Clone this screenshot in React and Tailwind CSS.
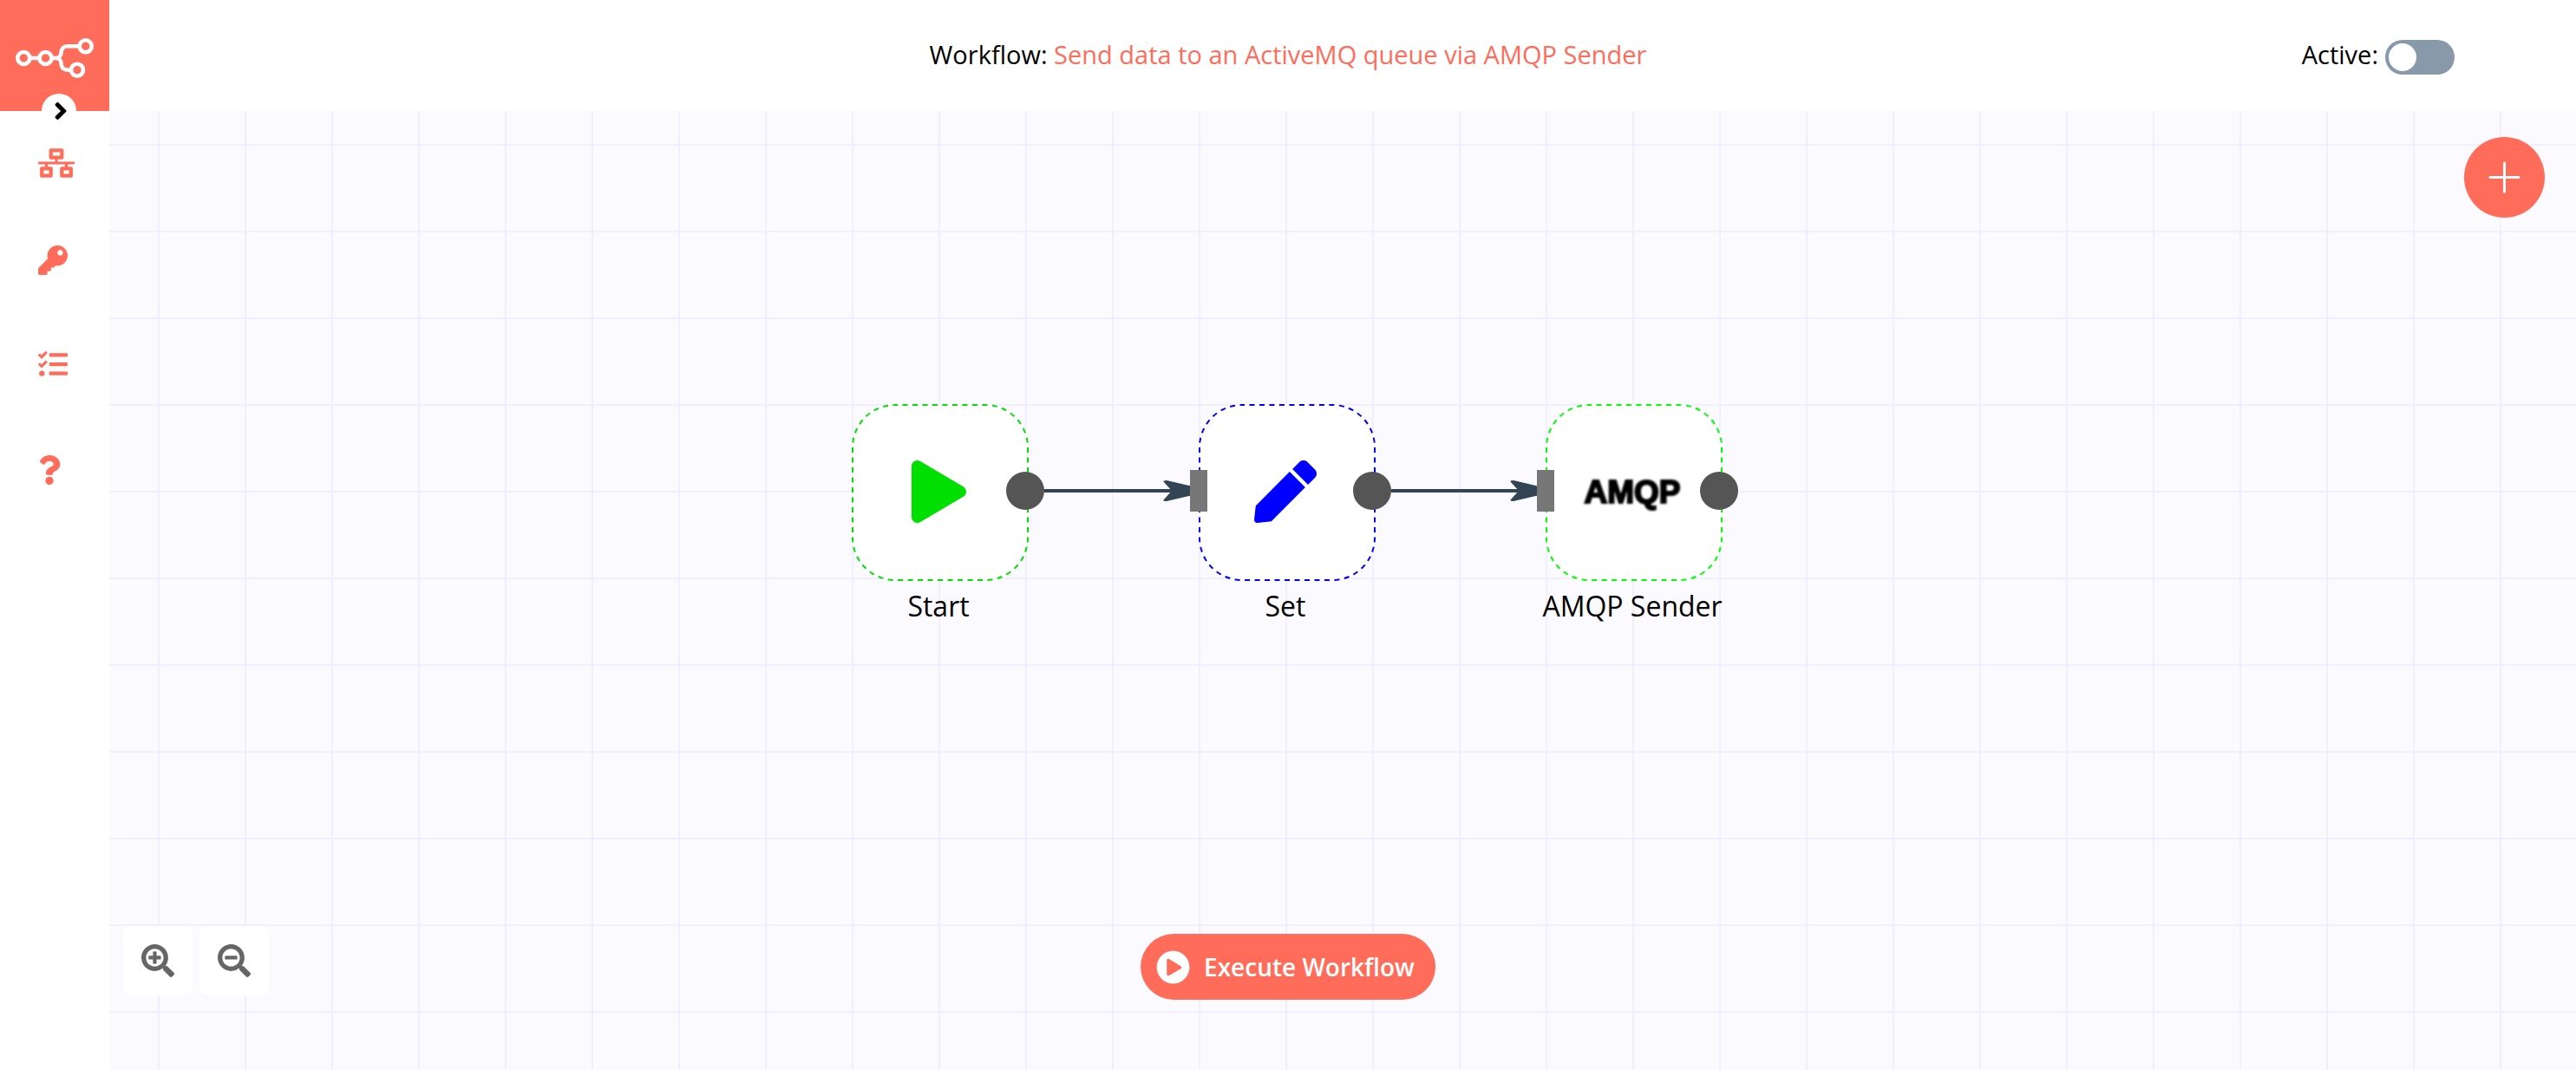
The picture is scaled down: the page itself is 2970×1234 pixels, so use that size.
import { useState } from "react";
import {
  FaAngleRight,
  FaKey,
  FaNetworkWired,
  FaPen,
  FaPlay,
  FaPlayCircle,
  FaQuestion,
  FaSearchMinus,
  FaSearchPlus,
  FaTasks,
} from "react-icons/fa";

const menu = [
  { label: "Workflows", Icon: FaNetworkWired, size: "h-[104px]", width: "w-[42px]" },
  { label: "Credentials", Icon: FaKey, size: "h-[120px]", width: "w-[34px]" },
  { label: "Executions", Icon: FaTasks, size: "h-[120px]", width: "w-[34px]" },
  { label: "Help", Icon: FaQuestion, size: "h-[124px]", width: "w-[26px]" },
];

const nodes = [
  {
    name: "Start",
    left: 856,
    top: 338,
    stroke: "stroke-[#00e000]",
    icon: <FaPlay className="h-[72px] w-[63px] text-[#00e000]" />,
  },
  {
    name: "Set",
    left: 1256,
    top: 338,
    input: true,
    stroke: "stroke-[#0000ff]",
    icon: <FaPen className="size-[72px] text-[#0000ff]" />,
  },
  {
    name: "AMQP Sender",
    left: 1656,
    top: 338,
    input: true,
    stroke: "stroke-[#00ff00]",
    icon: (
      <span className="font-['Liberation_Sans',Arial,sans-serif] text-[37px] leading-none font-bold text-black blur-[1px] [-webkit-text-stroke:2px_black]">
        AMQP
      </span>
    ),
  },
];

const connections = [
  { left: 1078, top: 426 },
  { left: 1478, top: 426 },
];

function Logo() {
  return (
    <svg viewBox="0 0 90 46" className="h-[46px] w-[90px]" fill="none" stroke="white" strokeWidth="4.6" aria-hidden="true">
      <circle cx="9.3" cy="23" r="7" />
      <circle cx="34.5" cy="23" r="7" />
      <circle cx="80.7" cy="9.3" r="7" />
      <circle cx="71" cy="36.7" r="7" />
      <path d="M16.5 23H27.5M41.5 23H46C50 23 52.500 20 52.500 17C52.500 12.500 55.500 9.300 60 9.300H73.500M46 23C50 23 52.500 26 52.500 29C52.500 33.500 55.500 36.700 60 36.700H64" />
    </svg>
  );
}

function Connection({ left, top }) {
  return (
    <svg className="absolute h-6 w-[184px]" style={{ left, top }} viewBox="0 0 184 24" aria-hidden="true">
      <path d="M0 12H150" stroke="#334455" strokeWidth="4" />
      <path d="M141 0L184 10V14L141 24Q137 24 137.500 22.500L147 12L137.500 1.500Q137 0 141 0Z" fill="#334455" />
    </svg>
  );
}

function Node({ name, left, top, stroke, icon, input }) {
  return (
    <div className="absolute w-[200px]" style={{ left, top }}>
      <div className="relative flex size-[204px] items-center justify-center rounded-[50px] bg-white pr-1 pb-0.5">
        <svg viewBox="0 0 204 204" className="absolute inset-0 size-full" aria-hidden="true">
          <rect
            x="1"
            y="1"
            width="202"
            height="202"
            rx="49"
            fill="none"
            strokeWidth="2"
            strokeDasharray="6 5.49"
            strokeDashoffset="3"
            className={stroke}
          />
        </svg>
        {icon}
      </div>
      {input && <div className="absolute top-[76px] -left-[10px] h-12 w-5 bg-[#777777]" />}
      <div className="absolute top-[78px] -right-[22px] size-11 rounded-full bg-[#555555]" />
      <p className="mt-[7px] flex justify-center text-[32px] leading-[44px] whitespace-nowrap text-black">{name}</p>
    </div>
  );
}

export default function App() {
  const [active, setActive] = useState(false);

  return (
    <div className="flex min-h-screen flex-col bg-white font-['Open_Sans',sans-serif] text-black">
      <header className="grid h-32 grid-cols-[1fr_auto_1fr] items-center text-[29px] leading-10">
        <div className="relative z-10 flex h-32 w-[126px] items-center justify-center bg-[#ff6d5a] pt-[6px]">
          <Logo />
          <button
            type="button"
            aria-label="Expand menu"
            className="absolute -bottom-5 left-12 flex size-10 items-center justify-center rounded-full bg-white pl-1"
          >
            <FaAngleRight className="size-8" />
          </button>
        </div>
        <h1 className="pb-0.5">
          Workflow:{" "}
          <a href="#workflow" className="text-[#ff6d5a]">
            Send data to an ActiveMQ queue via AMQP Sender
          </a>
        </h1>
        <label className="flex items-center justify-end gap-2 pr-[140px]">
          <span className="pb-0.5">Active:</span>
          <input
            type="checkbox"
            role="switch"
            checked={active}
            onChange={() => setActive(!active)}
            className="mt-1 h-10 w-20 appearance-none rounded-full bg-[#8899aa] p-1 before:block before:size-8 before:rounded-full before:bg-white checked:bg-[#13ce66] checked:before:ml-auto"
          />
        </label>
      </header>

      <div className="relative flex flex-1">
        <nav className="w-[126px] shrink-0 pt-2">
          <ul>
            {menu.map(({ label, Icon, size, width }) => (
              <li key={label}>
                <button type="button" aria-label={label} className={`flex w-full items-center pl-11 text-[#ff6d5a] ${size}`}>
                  <Icon className={`h-[34px] ${width}`} />
                </button>
              </li>
            ))}
          </ul>
        </nav>

        <main className="relative flex-1 overflow-hidden bg-[#fafaff] bg-[linear-gradient(to_right,#f0eeff_2px,transparent_2px),linear-gradient(to_bottom,#f0eeff_2px,transparent_2px)] bg-[length:100px_100px] bg-[position:56px_38px]">
          {connections.map((c) => (
            <Connection key={c.left} {...c} />
          ))}
          {nodes.map((n) => (
            <Node key={n.name} {...n} />
          ))}

          <button
            type="button"
            aria-label="Add node"
            className="absolute top-[30px] right-9 flex size-[93px] items-center justify-center rounded-full bg-[#ff6d5a]"
          >
            <svg viewBox="0 0 37 37" className="size-[37px]" stroke="white" strokeWidth="3" strokeLinecap="round" aria-hidden="true">
              <path d="M18.500 2V35M2 18.500H35" />
            </svg>
          </button>

          <div className="absolute bottom-[86px] left-4 flex gap-2 text-[#666666]">
            <button type="button" aria-label="Zoom in" className="flex size-20 items-center justify-center rounded-lg bg-white">
              <FaSearchPlus className="size-[38px]" />
            </button>
            <button type="button" aria-label="Zoom out" className="flex size-20 items-center justify-center rounded-lg bg-white">
              <FaSearchMinus className="size-[38px]" />
            </button>
          </div>
        </main>

        <button
          type="button"
          className="absolute bottom-[81px] left-1/2 flex h-[76px] -translate-x-1/2 items-center gap-4 rounded-full bg-[#ff6d5a] pr-6 pl-[18px] text-[28px] leading-10 font-semibold whitespace-nowrap text-white"
        >
          <FaPlayCircle className="size-[39px]" />
          Execute Workflow
        </button>
      </div>
    </div>
  );
}
